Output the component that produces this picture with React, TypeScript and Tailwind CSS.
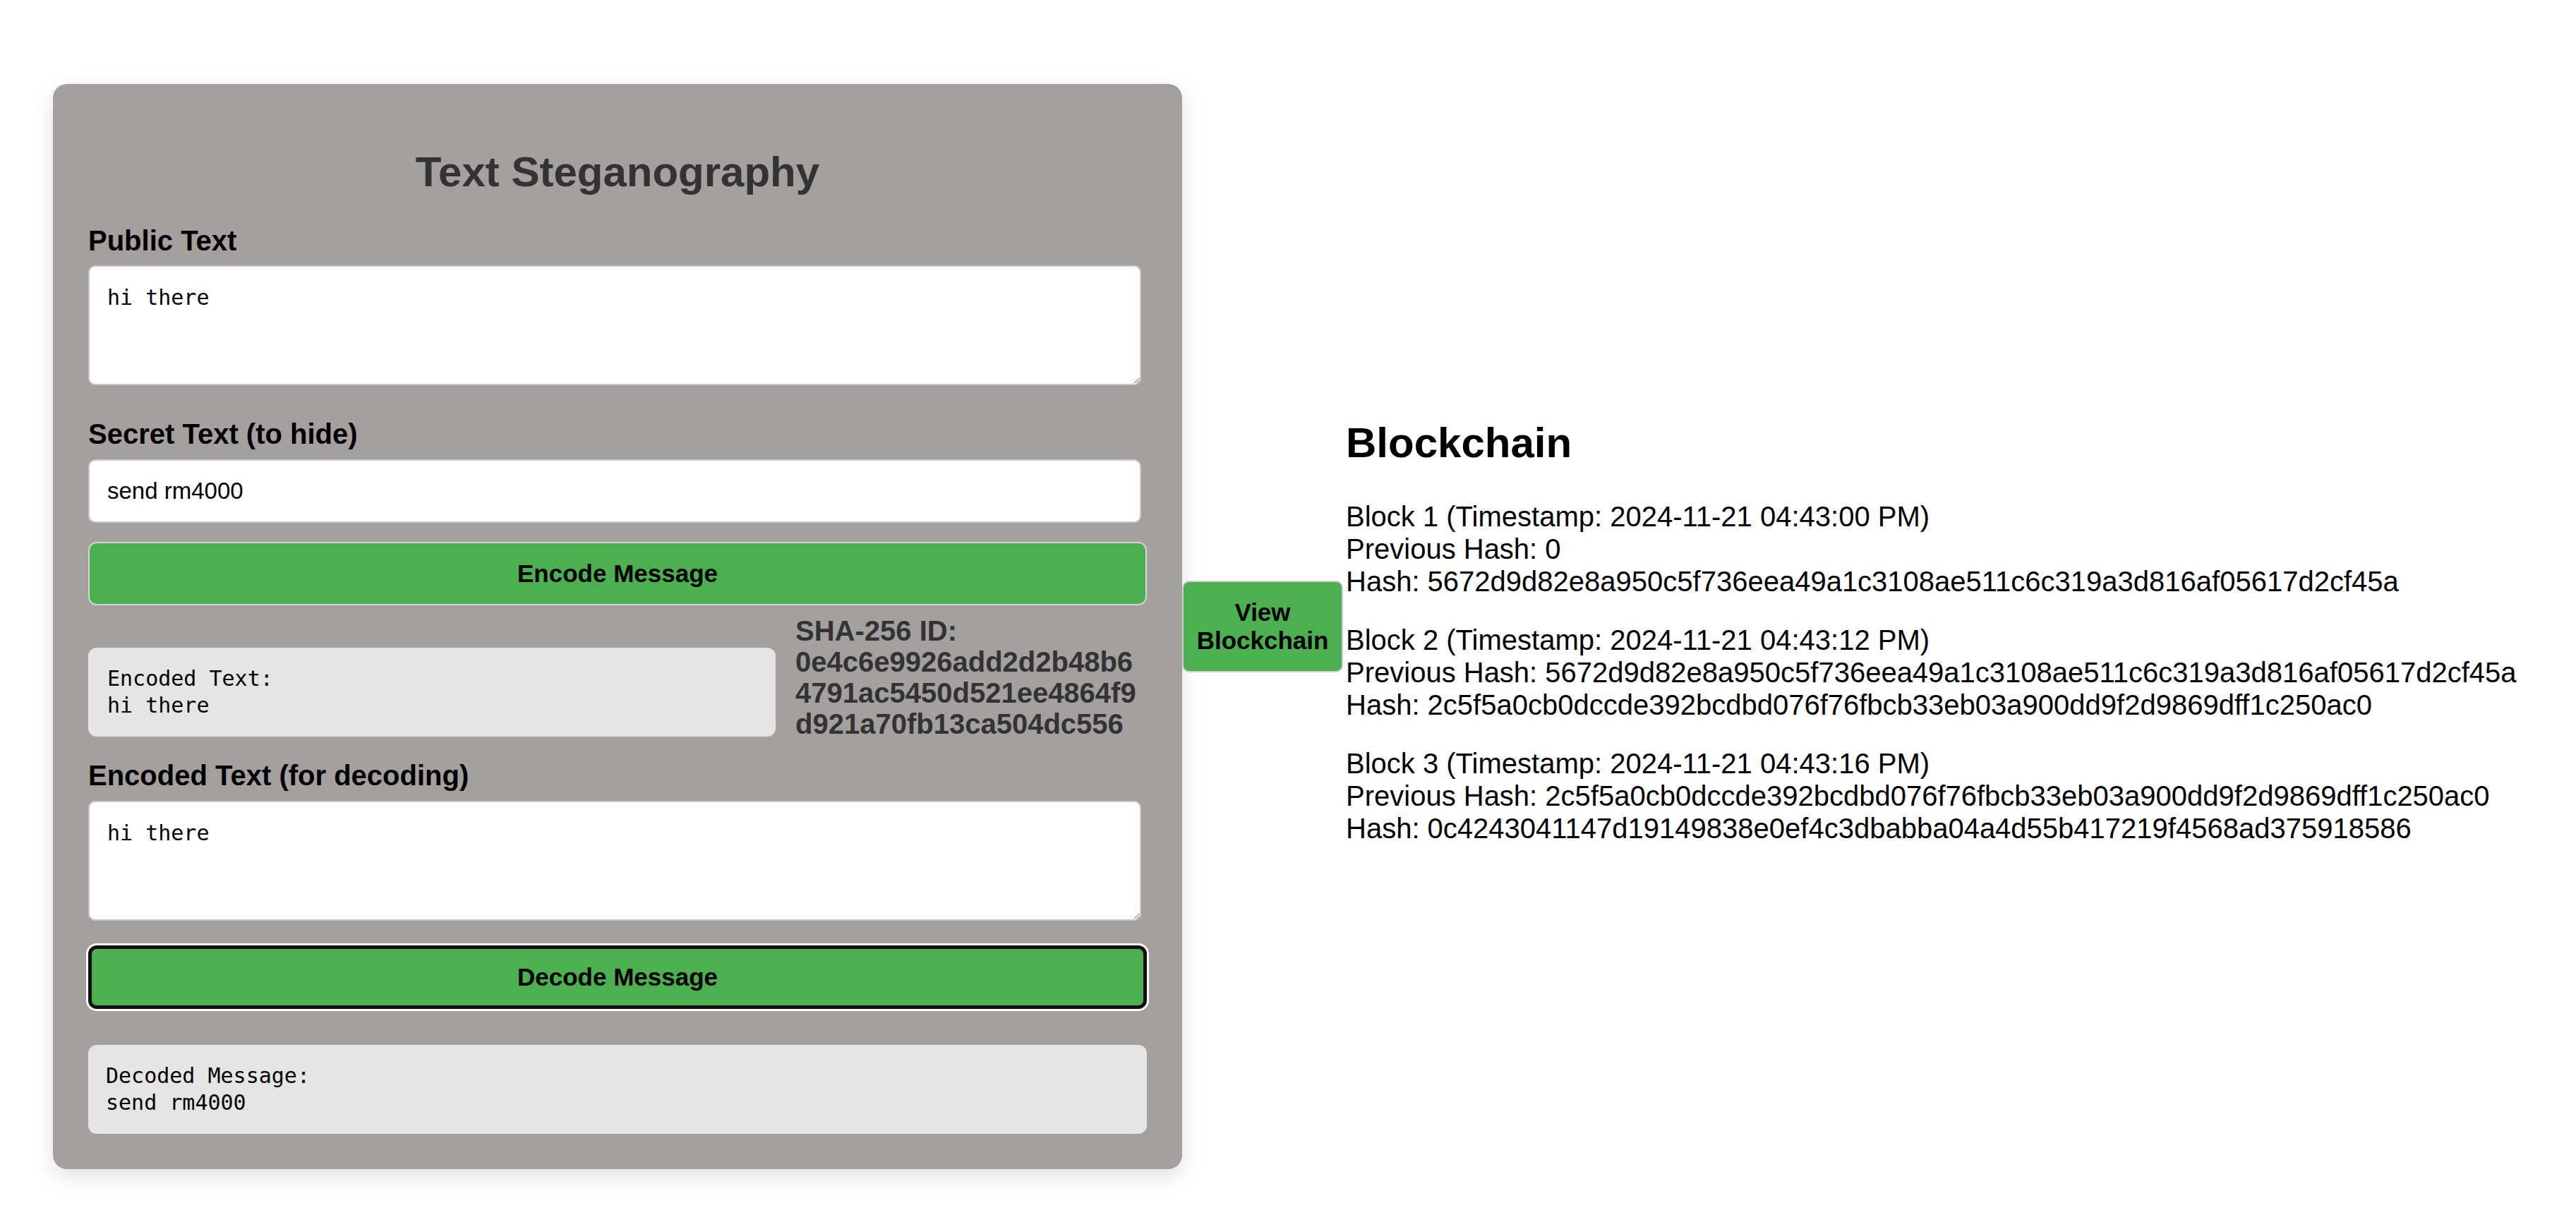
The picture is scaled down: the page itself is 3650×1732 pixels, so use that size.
import { useState } from 'react'

const blocks = [
  {
    id: 1,
    time: '2024-11-21 04:43:00 PM',
    prev: '0',
    hash: '5672d9d82e8a950c5f736eea49a1c3108ae511c6c319a3d816af05617d2cf45a',
  },
  {
    id: 2,
    time: '2024-11-21 04:43:12 PM',
    prev: '5672d9d82e8a950c5f736eea49a1c3108ae511c6c319a3d816af05617d2cf45a',
    hash: '2c5f5a0cb0dccde392bcdbd076f76fbcb33eb03a900dd9f2d9869dff1c250ac0',
  },
  {
    id: 3,
    time: '2024-11-21 04:43:16 PM',
    prev: '2c5f5a0cb0dccde392bcdbd076f76fbcb33eb03a900dd9f2d9869dff1c250ac0',
    hash: '0c4243041147d19149838e0ef4c3dbabba04a4d55b417219f4568ad375918586',
  },
]

export default function App() {
  const [publicText, setPublicText] = useState('hi there')
  const [secretText, setSecretText] = useState('send rm4000')
  const [encodedInput, setEncodedInput] = useState('hi there')

  const mono = "font-['DejaVu_Sans_Mono',monospace] text-[30px] leading-[38px]"

  return (
    <div className="min-h-screen bg-white font-['Liberation_Sans',Arial,sans-serif] text-black">
      <div className="flex items-center pt-[119px] pl-[75px]">
        {/* Steganography card */}
        <div className="w-[1600px] shrink-0 rounded-[20px] bg-[#a3a09f] px-[50px] pt-[50px] pb-[50px] shadow-[0_10px_30px_rgba(0,0,0,0.12)]">
          <h1 className="mt-[40px] mb-[40px] text-center text-[60px] leading-[69px] font-bold text-[#333]">
            Text Steganography
          </h1>

          <label className="block mb-[12px] text-[40px] leading-[46px] font-bold">Public Text</label>
          <textarea
            value={publicText}
            onChange={(e) => setPublicText(e.target.value)}
            className={`block h-[170px] w-[1492px] rounded-[10px] border-2 border-[#c8c8c8] bg-white px-[25px] py-[25px] ${mono}`}
          />

          <label className="block mt-[46px] mb-[13px] text-[40px] leading-[46px] font-bold">Secret Text (to hide)</label>
          <input
            value={secretText}
            onChange={(e) => setSecretText(e.target.value)}
            className="block h-[90px] w-[1492px] rounded-[10px] border-2 border-[#c8c8c8] bg-white px-[25px] text-[33px] font-['Liberation_Sans',Arial,sans-serif]"
          />

          <button className="mt-[27px] block h-[90px] w-full rounded-[12px] border-2 border-[#d4d4d4] bg-[#4caf50] text-[35px] font-bold">
            Encode Message
          </button>

          <div className="mt-[14px] flex items-start gap-[28px]">
            <div className={`mt-[46px] w-[974px] shrink-0 rounded-[12px] bg-[#e5e5e5] px-[27px] py-[25px] whitespace-pre-wrap ${mono}`}>
              {'Encoded Text:\nhi there'}
            </div>
            <div className="w-[496px] break-all text-[40px] leading-[44px] font-bold text-[#333]">
              SHA-256 ID:
              <br />
              0e4c6e9926add2d2b48b64791ac5450d521ee4864f9d921a70fb13ca504dc556
            </div>
          </div>

          <label className="block mt-[28px] mb-[13px] text-[40px] leading-[46px] font-bold">Encoded Text (for decoding)</label>
          <textarea
            value={encodedInput}
            onChange={(e) => setEncodedInput(e.target.value)}
            className={`block h-[170px] w-[1492px] rounded-[10px] border-2 border-[#c8c8c8] bg-white px-[25px] py-[25px] ${mono}`}
          />

          <button className="mt-[35px] block h-[90px] w-full rounded-[12px] border-[5px] border-[#101010] bg-[#4caf50] text-[35px] font-bold shadow-[0_0_0_3px_white]">
            Decode Message
          </button>

          <div className={`mt-[51px] rounded-[12px] bg-[#e5e5e5] px-[25px] py-[25px] whitespace-pre-wrap ${mono}`}>
            {'Decoded Message:\nsend rm4000'}
          </div>
        </div>

        {/* View button */}
        <button className="w-[228px] shrink-0 rounded-[10px] border-2 border-[#cfcfcf] bg-[#4caf50] px-[18px] py-[23px] text-center text-[35px] leading-[40px] font-bold">
          View Blockchain
        </button>

        {/* Blockchain listing */}
        <div className="ml-[4px] shrink-0">
          <h2 className="mt-[50px] mb-[47px] text-[60px] leading-[69px] font-bold">Blockchain</h2>
          {blocks.map((b) => (
            <div key={b.id} className="mb-[37px] text-[40px] leading-[46px] whitespace-nowrap">
              <div>
                Block {b.id} (Timestamp: {b.time})
              </div>
              <div>Previous Hash: {b.prev}</div>
              <div>Hash: {b.hash}</div>
            </div>
          ))}
        </div>
      </div>
    </div>
  )
}
